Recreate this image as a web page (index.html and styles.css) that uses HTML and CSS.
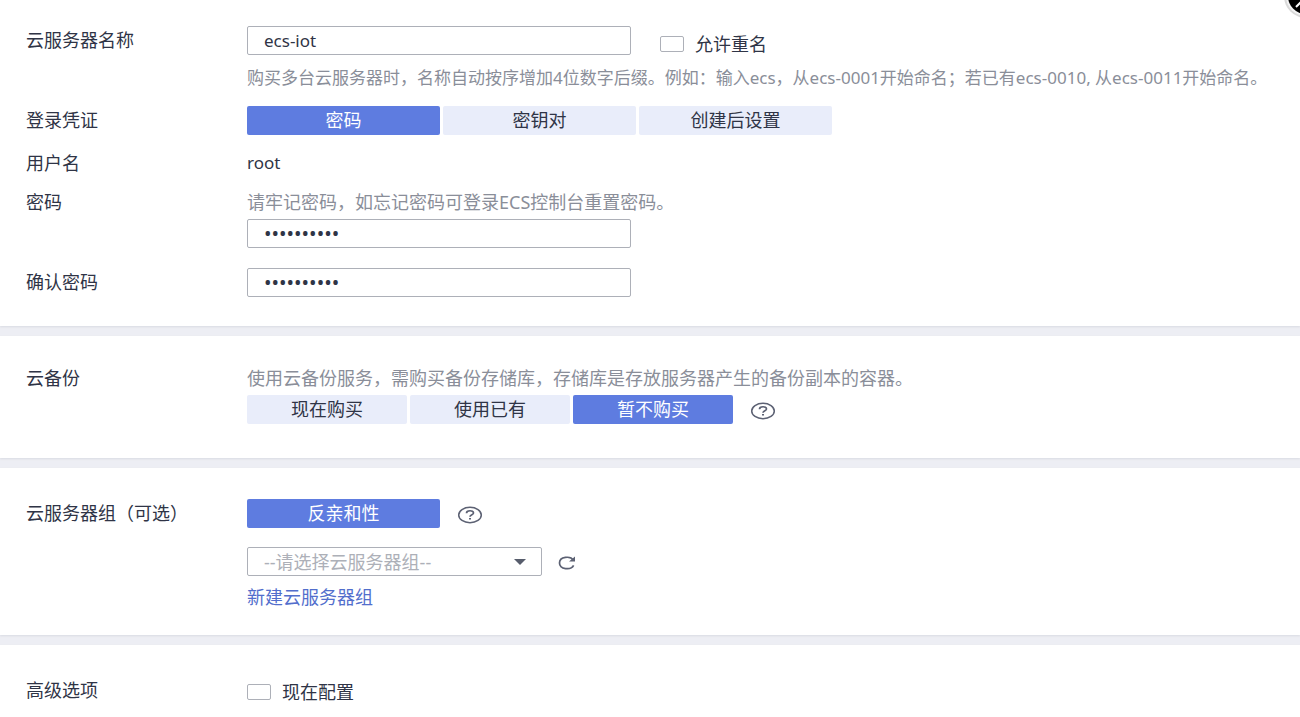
FILE: index.html
```
<!DOCTYPE html>
<html lang="zh-CN">
<head>
    <meta charset="UTF-8">
    <meta name="viewport" content="width=device-width, initial-scale=1.0">
    <title>购买弹性云服务器</title>
    <link rel="stylesheet" href="styles.css">
</head>
<body>

    <button type="button" class="corner-btn" aria-label="关闭">
        <svg width="16" height="18" viewBox="0 0 16 18">
            <circle cx="22" cy="-4" r="22" fill="#d9d9d9"/>
            <circle cx="22" cy="-4" r="20" fill="#f4f4f4"/>
            <circle cx="22" cy="-4" r="18" fill="#000"/>
            <path d="M12 7 L17 2" stroke="#fff" stroke-width="2"/>
        </svg>
    </button>

    <form class="form">
        <!-- 基本信息 -->
        <section class="card card-first">
            <div class="row">
                <label class="label" for="server-name">云服务器名称</label>
                <div class="field">
                    <div class="line line-end">
                        <input type="text" id="server-name" class="input" value="ecs-iot">
                        <label class="check"><input type="checkbox"> 允许重名</label>
                    </div>
                    <p class="hint hint-below">购买多台云服务器时，名称自动按序增加4位数字后缀。例如：输入ecs，从ecs-0001开始命名；若已有ecs-0010, 从ecs-0011开始命名。</p>
                </div>
            </div>
            <div class="row">
                <span class="label">登录凭证</span>
                <div class="field">
                    <div class="tabs">
                        <button type="button" class="tab tab-wide active">密码</button>
                        <button type="button" class="tab tab-wide">密钥对</button>
                        <button type="button" class="tab tab-wide">创建后设置</button>
                    </div>
                </div>
            </div>
            <div class="row">
                <span class="label label-text">用户名</span>
                <div class="field"><span class="value">root</span></div>
            </div>
            <div class="row">
                <label class="label label-text" for="password">密码</label>
                <div class="field">
                    <p class="hint">请牢记密码，如忘记密码可登录ECS控制台重置密码。</p>
                    <input type="password" id="password" class="input input-password" value="abcd123456">
                </div>
            </div>
            <div class="row row-confirm">
                <label class="label" for="confirm">确认密码</label>
                <div class="field">
                    <input type="password" id="confirm" class="input input-password" value="abcd123456">
                </div>
            </div>
        </section>

        <!-- 云备份 -->
        <section class="card">
            <div class="row">
                <span class="label label-text">云备份</span>
                <div class="field">
                    <p class="hint">使用云备份服务，需购买备份存储库，存储库是存放服务器产生的备份副本的容器。</p>
                    <div class="line">
                        <div class="tabs">
                            <button type="button" class="tab">现在购买</button>
                            <button type="button" class="tab">使用已有</button>
                            <button type="button" class="tab active">暂不购买</button>
                        </div>
                        <button type="button" class="icon-btn" aria-label="帮助">
                            <svg width="26" height="18" viewBox="0 0 26 18" fill="none" stroke="#5c6173">
                                <ellipse cx="13" cy="9" rx="11.3" ry="7.7" stroke-width="1.5"/>
                                <path d="M9.5 7.2C9.5 4 16.5 4 16.5 7C16.5 8.8 13 8.6 13 10.8" stroke-width="1.7"/>
                                <path d="M12 12.8H14" stroke-width="1.5"/>
                            </svg>
                        </button>
                    </div>
                </div>
            </div>
        </section>

        <!-- 云服务器组 -->
        <section class="card">
            <div class="row">
                <label class="label" for="group">云服务器组（可选）</label>
                <div class="field">
                    <div class="line">
                        <button type="button" class="tab tab-wide active">反亲和性</button>
                        <button type="button" class="icon-btn" aria-label="帮助">
                            <svg width="26" height="18" viewBox="0 0 26 18" fill="none" stroke="#5c6173">
                                <ellipse cx="13" cy="9" rx="11.3" ry="7.7" stroke-width="1.5"/>
                                <path d="M9.5 7.2C9.5 4 16.5 4 16.5 7C16.5 8.8 13 8.6 13 10.8" stroke-width="1.7"/>
                                <path d="M12 12.8H14" stroke-width="1.5"/>
                            </svg>
                        </button>
                    </div>
                    <div class="line line-select">
                        <div class="select-box">
                            <select id="group" class="select">
                                <option>--请选择云服务器组--</option>
                            </select>
                            <svg class="arrow" width="12" height="6" viewBox="0 0 12 6"><path d="M0 0H12L6 6Z" fill="#575d6c"/></svg>
                        </div>
                        <button type="button" class="icon-btn" aria-label="刷新">
                            <svg width="18" height="14" viewBox="0 0 18 14" fill="none" stroke="#5c6173" stroke-width="1.7">
                                <path d="M15.5 4.2C12.5 -0.5 1.5 0.5 1.5 7C1.5 13.5 13 14.5 15.6 9.3"/>
                                <path d="M17 0.5V5.4H11Z" fill="#5c6173" stroke="none"/>
                            </svg>
                        </button>
                    </div>
                    <a href="#" class="link">新建云服务器组</a>
                </div>
            </div>
        </section>

        <!-- 高级选项 -->
        <section class="card">
            <div class="row">
                <span class="label">高级选项</span>
                <div class="field">
                    <label class="check check-row"><input type="checkbox"> 现在配置</label>
                </div>
            </div>
        </section>
    </form>

</body>
</html>
```
FILE: styles.css
```
/* 全局样式 */
* {
    box-sizing: border-box;
}

body {
    margin: 0;
    font-family: "Noto Sans", "Noto Sans CJK SC", sans-serif;
    font-size: 18px;
    line-height: 22px;
    color: #2f3446;
    background-color: #fff;
    overflow-x: hidden;
}

button,
input,
select {
    font-family: inherit;
    font-size: inherit;
    color: inherit;
    margin: 0;
}

.corner-btn {
    position: absolute;
    top: 0;
    right: 0;
    padding: 0;
    border: none;
    background: none;
    line-height: 0;
    cursor: pointer;
}

.form {
    display: flex;
    flex-direction: column;
    gap: 10px;
    background-color: #edeef4;
}

/* 分区 */
.card {
    display: flex;
    flex-direction: column;
    gap: 17px;
    padding: 31px 0 29px 26px;
    background-color: #fff;
    box-shadow: 0 1px 2px #d9dbe2;
}

.card-first {
    padding-top: 26px;
}

.card + .card {
    padding-bottom: 34px;
}

.card + .card + .card {
    padding-bottom: 27px;
}

.row {
    display: grid;
    grid-template-columns: 221px minmax(0, 1fr);
}

.row-confirm {
    margin-top: 3px;
}

.label {
    line-height: 29px;
    white-space: nowrap;
}

.label-text {
    line-height: 22px;
}

.line {
    display: flex;
    align-items: center;
    gap: 17px;
}

.line-end {
    align-items: flex-end;
    gap: 29px;
}

.line-select {
    gap: 16px;
    margin: 19px 0 10px;
}

/* 文字 */
.hint {
    margin: 0 0 6px;
    color: #8a8e99;
}

.hint-below {
    margin: 12px 0 0;
    font-size: 17px;
}

.value {
    display: block;
    font-size: 17px;
}

.link {
    display: block;
    width: fit-content;
    color: #526ecc;
    text-decoration: none;
}

/* 控件 */
.input,
.select {
    display: block;
    height: 29px;
    padding: 0 16px;
    border: 1px solid #adb0b8;
    border-radius: 2px;
    background-color: #fff;
}

.input {
    width: 384px;
    font-size: 17px;
}

.input-password {
    font-size: 20px;
}

.select {
    width: 100%;
    appearance: none;
    color: #adb0b8;
}

.select-box {
    position: relative;
    width: 295px;
}

.arrow {
    position: absolute;
    top: 12px;
    right: 16px;
    pointer-events: none;
}

.tabs {
    display: flex;
    gap: 3px;
}

.tab {
    width: 160px;
    height: 29px;
    padding: 0;
    border: none;
    border-radius: 2px;
    background-color: #e9edfa;
    line-height: 29px;
    cursor: pointer;
}

.tab-wide {
    width: 193px;
}

.tab.active {
    background-color: #5e7ce0;
    color: #fff;
}

.icon-btn {
    padding: 2px 0 0;
    border: none;
    background: none;
    line-height: 0;
    cursor: pointer;
}

.check {
    display: flex;
    align-items: center;
    gap: 11px;
}

.check-row {
    height: 31px;
}

.check input {
    appearance: none;
    width: 24px;
    height: 16px;
    border: 1px solid #adb0b8;
    border-radius: 2px;
    background-color: #fff;
}
```
